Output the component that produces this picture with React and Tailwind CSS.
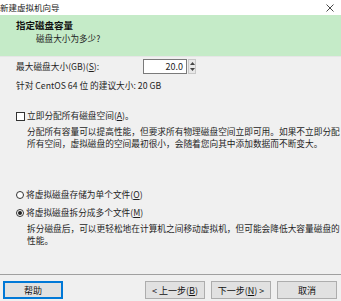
import React from "react";

function Radio({ checked }) {
  return (
    <span className="relative inline-flex h-[8px] w-[8px] items-center justify-center rounded-full border border-[#333] bg-white">
      {checked && <span className="h-[4px] w-[4px] rounded-full bg-[#222]" />}
    </span>
  );
}

function Btn({ children, focus, className = "" }) {
  return (
    <div
      className={
        "flex h-[18px] w-[60px] items-center justify-center border text-[9px] leading-none text-[#111] bg-[#e1e1e1] " +
        (focus
          ? "border-[#0078d7] shadow-[inset_0_0_0_1px_#0078d7] "
          : "border-[#adadad] ") +
        className
      }
    >
      {children}
    </div>
  );
}

export default function App() {
  return (
    <div className="flex h-[301px] w-[341px] flex-col overflow-hidden bg-[#f0f0f0] font-['Noto_Sans_CJK_SC',sans-serif] text-[#1e1e1e]">
      {/* title bar */}
      <div className="flex h-[15px] items-center justify-between bg-white">
        <span className="ml-0 text-[8.5px] leading-none text-[#222]">新建虚拟机向导</span>
        <svg width="8" height="8" viewBox="0 0 8 8" className="mr-[7px]">
          <path d="M0.5 0.5 L7.5 7.5 M7.5 0.5 L0.5 7.5" stroke="#333" strokeWidth="0.9" />
        </svg>
      </div>
      {/* header */}
      <div className="h-[42px] border-b border-[#e6e6e6] bg-[#c5ebc8]">
        <div className="mt-[4px] pl-[16px] text-[9.5px] font-bold leading-[12px] text-[#111]">指定磁盘容量</div>
        <div className="mt-[1px] pl-[36px] text-[8.6px] leading-[12px] text-[#222]">磁盘大小为多少?</div>
      </div>
      {/* body */}
      <div className="flex-1 pl-[16px] text-[8.7px] leading-[12px]">
        <div className="mt-[2px] flex h-[15px] items-center">
          <span className="w-[127px]">
            最大磁盘大小(GB)(<u>S</u>):
          </span>
          <div className="flex h-[15px] w-[44px] items-center justify-end border border-[#7a7a7a] bg-white pr-[3px] text-[9px]">
            20.0
          </div>
          <div className="ml-[1px] flex h-[15px] w-[8px] flex-col border border-[#c8c8c8] bg-[#e8e8e8]">
            <div className="flex flex-1 items-center justify-center">
              <svg width="5" height="3" viewBox="0 0 5 3"><path d="M0 3 L2.5 0 L5 3 Z" fill="#444" /></svg>
            </div>
            <div className="flex flex-1 items-center justify-center">
              <svg width="5" height="3" viewBox="0 0 5 3"><path d="M0 0 L2.5 3 L5 0 Z" fill="#444" /></svg>
            </div>
          </div>
        </div>
        <div className="mt-[6px]">针对 CentOS 64 位 的建议大小: 20 GB</div>

        <div className="mt-[18px] flex items-center">
          <span className="h-[9px] w-[9px] border border-[#333] bg-white" />
          <span className="ml-[2px]">
            立即分配所有磁盘空间(<u>A</u>)。
          </span>
        </div>
        <div className="mt-[4px] pl-[11px]">
          <div className="whitespace-nowrap">分配所有容量可以提高性能，但要求所有物理磁盘空间立即可用。如果不立即分配</div>
          <div className="whitespace-nowrap">所有空间，虚拟磁盘的空间最初很小，会随着您向其中添加数据而不断变大。</div>
        </div>

        <div className="mt-[39px] flex items-center">
          <Radio />
          <span className="ml-[2px]">
            将虚拟磁盘存储为单个文件(<u>O</u>)
          </span>
        </div>
        <div className="mt-[6px] flex items-center">
          <Radio checked />
          <span className="ml-[2px]">
            将虚拟磁盘拆分成多个文件(<u>M</u>)
          </span>
        </div>
        <div className="mt-[4px] pl-[11px]">
          <div className="whitespace-nowrap">拆分磁盘后，可以更轻松地在计算机之间移动虚拟机，但可能会降低大容量磁盘的</div>
          <div>性能。</div>
        </div>
      </div>
      {/* footer */}
      <div className="h-[27px] border-t border-[#a0a0a0]">
        <div className="mt-[6px] flex pr-[4px] pl-[3px]">
          <Btn focus>帮助</Btn>
          <div className="flex-1" />
          <Btn>&lt; 上一步(<u>B</u>)</Btn>
          <Btn className="ml-[6px]">下一步(<u>N</u>) &gt;</Btn>
          <Btn className="ml-[6px]">取消</Btn>
        </div>
      </div>
    </div>
  );
}
